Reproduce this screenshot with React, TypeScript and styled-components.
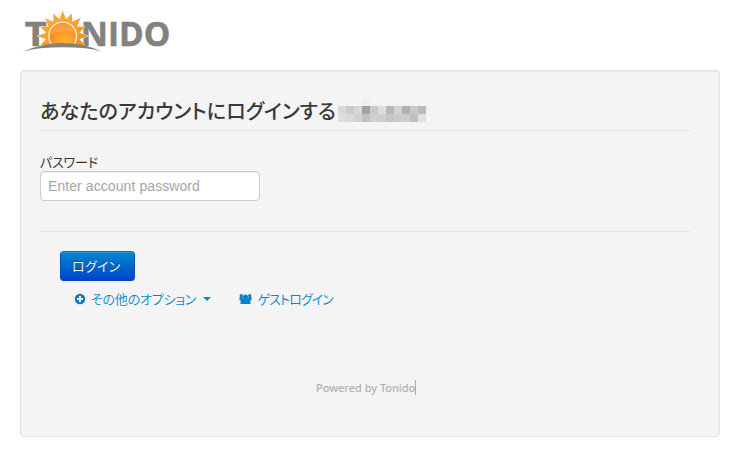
import React from 'react';
import styled, { createGlobalStyle } from 'styled-components';

const Global = createGlobalStyle`
  * { box-sizing: border-box; }
  body { margin: 0; background: #fff; color: #333; font-family: "Liberation Sans", "Noto Sans CJK JP", sans-serif; }
`;

const Page = styled.div`
  width: 740px;
  height: 458px;
  padding: 8px 20px 0;
`;

const Header = styled.header`
  height: 62px;
`;

const Logo = styled.svg`
  display: block;
  width: 155px;
  height: 48px;
`;

const Well = styled.main`
  width: 700px;
  height: 367px;
  padding: 19px;
  background: #f4f4f4;
  border: 1px solid #e2e2e2;
  border-radius: 4px;
  box-shadow: inset 0 1px 1px rgba(0, 0, 0, 0.05);
`;

const Heading = styled.div`
  display: flex;
  align-items: flex-start;
  width: 650px;
  height: 41px;
  border-bottom: 1px solid #e3e3e3;
`;

const Japanese = styled.span<{ $size: number; $gap: number; $weight?: number }>`
  font-family: "Noto Sans CJK JP", sans-serif;
  font-size: ${p => p.$size}px;
  font-weight: ${p => p.$weight ?? 350};
  letter-spacing: ${p => p.$gap}px;
  font-feature-settings: "palt";
  white-space: nowrap;
`;

const Title = styled.h1`
  margin: 0;
  width: 298px;
  padding-top: 6px;
  line-height: 30px;
  font-size: 20px;
  color: #383838;
`;

const Mosaic = styled.div`
  display: grid;
  grid-template-columns: repeat(11, 8px);
  grid-auto-rows: 8px;
  margin-top: 8px;
`;

const Tile = styled.i<{ $color: string }>`
  background: ${p => p.$color};
`;

const Form = styled.form`
  width: 650px;
  height: 101px;
  padding-top: 21px;
  border-bottom: 1px solid #e3e3e3;
`;

const Label = styled.label`
  display: block;
  height: 19px;
  line-height: 20px;
`;

const Input = styled.input`
  display: block;
  width: 220px;
  height: 30px;
  padding: 4px 7px;
  font: 14px/20px "Liberation Sans", sans-serif;
  letter-spacing: 0.08px;
  color: #555;
  background: #fff;
  border: 1px solid #ccc;
  border-radius: 4px;
  box-shadow: inset 0 1px 1px rgba(0, 0, 0, 0.075);
  outline: none;
  &::placeholder { color: #a5a5a5; opacity: 1; }
`;

const Actions = styled.div`
  padding: 19px 0 0 20px;
`;

const Button = styled.button`
  display: block;
  width: 75px;
  height: 30px;
  padding: 0 0 0 11px;
  text-align: left;
  line-height: 28px;
  color: #fff;
  background: linear-gradient(#0088cc, #0044cc);
  border: 1px solid;
  border-color: #0377b6 #0a50b8 #0640b5;
  border-radius: 4px;
  box-shadow: inset 0 1px 0 rgba(255, 255, 255, 0.15), 0 1px 2px rgba(0, 0, 0, 0.05);
  text-shadow: 0 -1px 0 rgba(0, 0, 0, 0.25);
`;

const Links = styled.nav`
  display: flex;
  height: 36px;
  padding-left: 14px;
`;

const Link = styled.a<{ $width: number; $iconGap: number }>`
  display: flex;
  align-items: center;
  width: ${p => p.$width}px;
  gap: ${p => p.$iconGap}px;
  color: #0088cc;
  text-decoration: none;
`;

const LinkText = styled.span<{ $width?: number }>`
  width: ${p => p.$width ? `${p.$width}px` : 'auto'};
  line-height: 20px;
`;

const Caret = styled.i`
  border: 4px solid transparent;
  border-top-color: #0088cc;
  border-bottom: 0;
`;

const Footer = styled.footer`
  display: flex;
  width: 101px;
  margin: 63px 0 0 276px;
  color: #b0b0b0;
  font: 500 11px/15px "Noto Sans", sans-serif;
  white-space: nowrap;
`;

const Powered = styled.span`
  width: 99px;
  letter-spacing: -0.02px;
`;

const Cursor = styled.i`
  width: 1px;
  height: 15px;
  background: #aaa;
`;

const tiles = [
  ...['#f4f4f4', '#f4f4f4', '#f4f4f4', '#efefef', '#f4f4f4', '#f4f4f4', '#f4f4f4', '#f4f4f4', '#f4f4f4', '#f4f4f4', '#f4f4f4'],
  ...['#dad9d8', '#cbcccf', '#d7d7d6', '#a99e9d', '#c6cdcc', '#dfdeda', '#b5b8bc', '#d4d4cc', '#b2afb5', '#c7c8ca', '#bababf'],
  ...['#dfdedd', '#dadad9', '#d2d2d2', '#c1bfc2', '#d0d0d2', '#cececa', '#c4c5c9', '#cdcbc7', '#cbccd0', '#bfbfbf', '#e0e1e4'],
];

const rays = Array.from({ length: 32 }, (_, i) => {
  const angle = -Math.PI / 2 + (i * Math.PI) / 16;
  const radius = i % 2 ? 17 : i % 4 ? 24.3 : 25.5;
  return `${62.7 + radius * Math.cos(angle)},${36 + radius * Math.sin(angle)}`;
}).join(' ');

const Brand = () => (
  <Logo viewBox="20 8 155 48" role="img" aria-label="Tonido">
    <defs>
      <linearGradient id="rays" x1="0" y1="0" x2="0.6" y2="1">
        <stop stopColor="#f8b83c" /><stop offset="1" stopColor="#f18a1d" />
      </linearGradient>
      <radialGradient id="sun" cx="0.6" cy="0.75" r="0.75">
        <stop stopColor="#ffb52d" /><stop offset="0.55" stopColor="#fb982a" /><stop offset="1" stopColor="#f57c1d" />
      </radialGradient>
      <clipPath id="horizon"><path d="M20 8H110V46.5Q63 43 20 46.5Z" /></clipPath>
    </defs>
    <g fill="#83827f" stroke="#83827f" strokeWidth="0.6" fontFamily="Open Sans" fontWeight="700" fontSize="34">
      <text x="24.8" y="45.5" textLength="22" lengthAdjust="spacingAndGlyphs">T</text>
      <text x="80.8" y="45.5" textLength="89.5" lengthAdjust="spacingAndGlyphs">NIDO</text>
    </g>
    <g clipPath="url(#horizon)">
      <polygon points={rays} fill="url(#rays)" stroke="#fff" strokeWidth="0.7" paintOrder="stroke" />
      <circle cx="62.7" cy="36" r="14.5" fill="#fff0d5" />
      <circle cx="62.7" cy="36" r="13.2" fill="url(#sun)" />
      <path d="M50 35Q52 23 63 23Q72 23 75 32Q63 29 50 35Z" fill="#ffb95c" opacity="0.45" />
    </g>
    <path d="M23 51.7Q42 43 63 43Q84 43 102 51.7Q94 49.1 85 48.3Q63 46.4 41 48.3Q32 49.1 23 51.7Z" fill="#83827f" />
  </Logo>
);

const PlusIcon = () => (
  <svg width="12" height="12" viewBox="0 0 12 12">
    <circle cx="6" cy="6" r="5.2" fill="#0879ba" />
    <path d="M6 3v6M3 6h6" stroke="#e9f4f9" strokeWidth="2" />
  </svg>
);

const GroupIcon = () => (
  <svg width="13" height="12" viewBox="0 0 13 12" fill="#0882c6">
    <circle cx="2.3" cy="2.8" r="1.7" /><circle cx="10.7" cy="2.8" r="1.7" />
    <path d="M.5 4h2.8l1.3 2h3.8l1.3-2h2.8v3.5h-1.5L11.5 9v2h-10V9L2 7.5H.5Z" />
    <circle cx="6.5" cy="3.9" r="2.5" />
  </svg>
);

export default function App() {
  return (
    <>
      <Global />
      <Page>
        <Header><Brand /></Header>
        <Well>
          <Heading>
            <Title><Japanese $size={20} $gap={0.12} $weight={500}>あなたのアカウントにログインする</Japanese></Title>
            <Mosaic aria-hidden="true">{tiles.map((color, i) => <Tile key={i} $color={color} />)}</Mosaic>
          </Heading>
          <Form>
            <Label htmlFor="password"><Japanese $size={13} $gap={-0.15} $weight={400}>パスワード</Japanese></Label>
            <Input id="password" type="password" placeholder="Enter account password" />
          </Form>
          <Actions>
            <Button type="button"><Japanese $size={13} $gap={0.3}>ログイン</Japanese></Button>
            <Links>
              <Link href="#options" $width={164.5} $iconGap={5}>
                <PlusIcon />
                <LinkText $width={107}><Japanese $size={13} $gap={-0.2}>その他のオプション</Japanese></LinkText>
                <Caret />
              </Link>
              <Link href="#guest" $width={110} $iconGap={6}>
                <GroupIcon />
                <LinkText><Japanese $size={13} $gap={-0.9}>ゲストログイン</Japanese></LinkText>
              </Link>
            </Links>
          </Actions>
          <Footer><Powered>Powered by Tonido</Powered><Cursor /></Footer>
        </Well>
      </Page>
    </>
  );
}
